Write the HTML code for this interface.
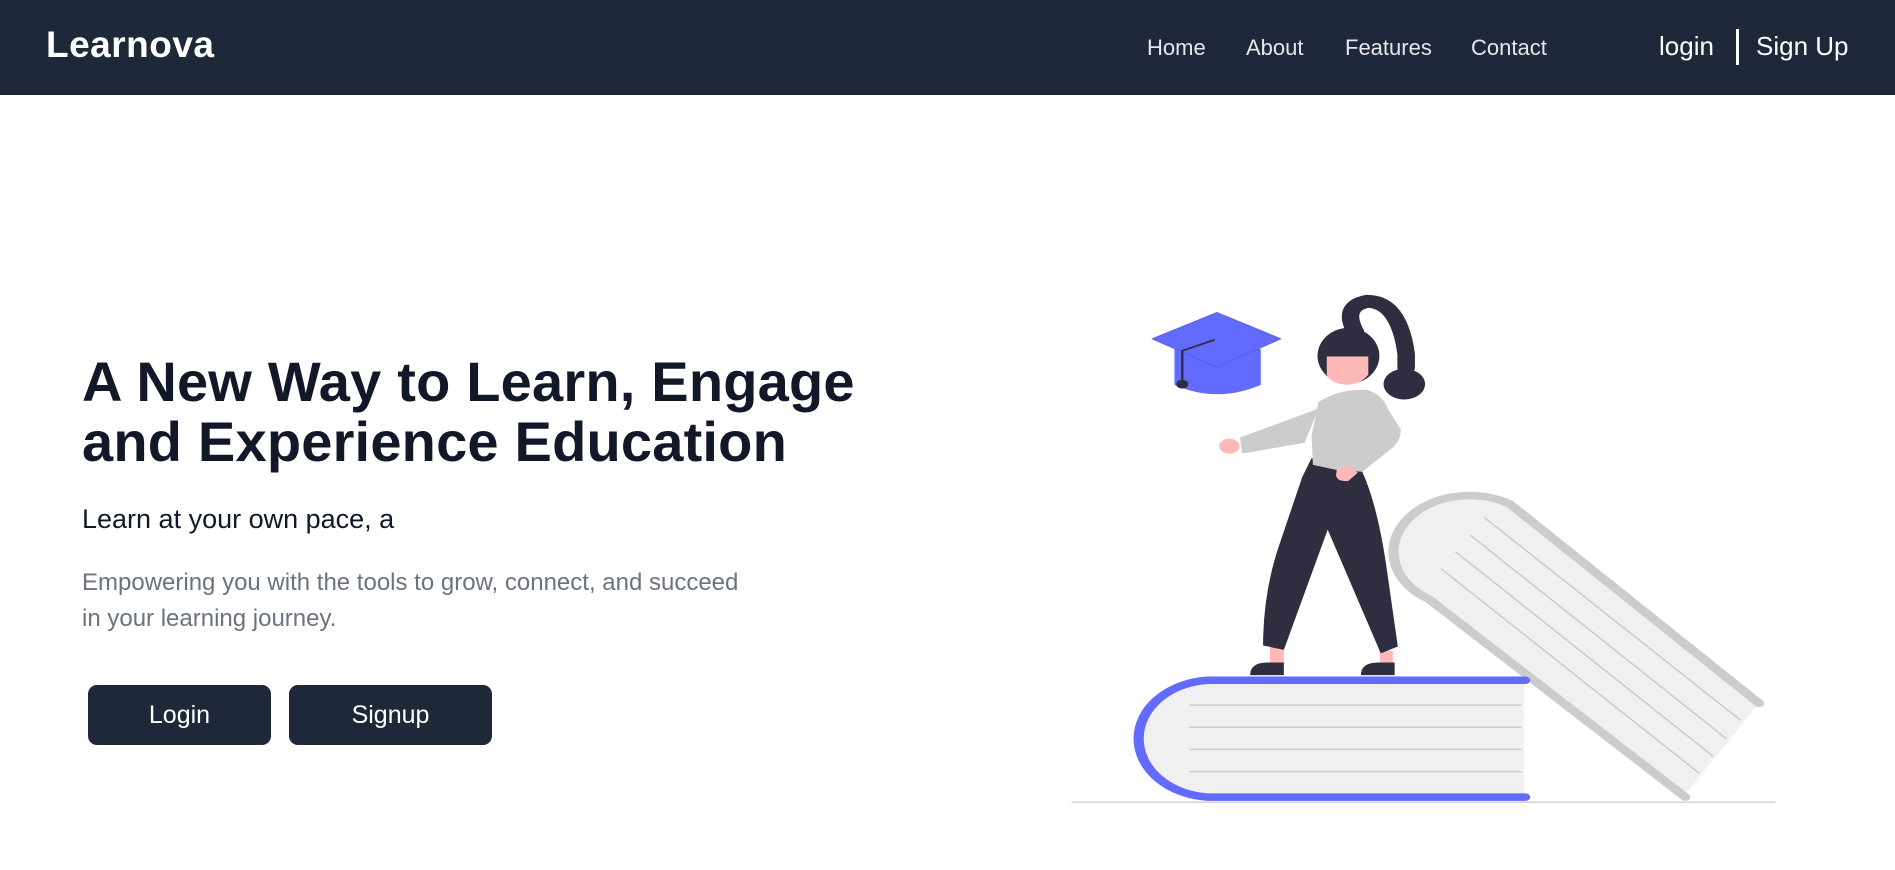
<!DOCTYPE html>
<html><head><meta charset="utf-8"><style>
*{margin:0;padding:0;box-sizing:border-box}
body{width:1895px;height:870px;background:#fff;font-family:"Liberation Sans",sans-serif;position:relative;overflow:hidden}
nav{position:absolute;left:0;top:0;width:1895px;height:95px;background:#1f2839}
.logo{position:absolute;left:46px;top:24px;color:#fff;font-size:37px;font-weight:bold;letter-spacing:0.5px}
.links a{position:absolute;top:35px;color:#e5e7eb;font-size:22px;text-decoration:none}
.auth{position:absolute;top:31px;color:#fff;font-size:26px}
.div{position:absolute;left:1736px;top:29px;width:3px;height:36px;background:#fff}
h1{position:absolute;left:82px;top:352px;font-size:56px;line-height:60px;color:#111827;font-weight:bold;letter-spacing:0.2px}
.sub{position:absolute;left:82px;top:504px;font-size:27px;color:#111827}
.p{position:absolute;left:82px;top:565px;width:680px;font-size:24px;line-height:36px;color:#6b7280}
.btn{position:absolute;top:685px;height:60px;background:#1f2839;color:#fff;font-size:25px;border-radius:9px;display:flex;align-items:center;justify-content:center}
svg{position:absolute;left:1060px;top:286px}
</style></head><body>
<nav>
<div class="logo">Learnova</div>
<div class="links">
<a style="left:1147px">Home</a><a style="left:1246px">About</a><a style="left:1345px">Features</a><a style="left:1471px">Contact</a>
</div>
<div class="auth" style="left:1659px">login</div>
<div class="div"></div>
<div class="auth" style="left:1756px">Sign Up</div>
</nav>
<h1>A New Way to Learn, Engage<br>and Experience Education</h1>
<div class="sub">Learn at your own pace, a</div>
<div class="p">Empowering you with the tools to grow, connect, and succeed in your learning journey.</div>
<div class="btn" style="left:88px;width:183px">Login</div>
<div class="btn" style="left:289px;width:203px">Signup</div>
<svg width="720" height="552" viewBox="0 0 1560 1620" preserveAspectRatio="none">
<line x1="25" y1="1515" x2="1550" y2="1515" stroke="#d8d8d8" stroke-width="5"/>
<path d="M1515,1225 L975,640 A150,150 0 0 0 800,920 L1350,1500 L1505,1240 Z" fill="#f0f0f0"/>
<path d="M1515,1225 L975,640 A150,150 0 0 0 800,920 L1355,1500" fill="none" stroke="#cccccc" stroke-width="22" stroke-linecap="round"/>
<g stroke="#cccccc" stroke-width="4">
<line x1="920" y1="680" x2="1475" y2="1275"/><line x1="888" y1="730" x2="1445" y2="1330"/>
<line x1="857" y1="780" x2="1415" y2="1380"/><line x1="826" y1="830" x2="1385" y2="1430"/></g>
<path d="M1005,1157 L320,1157 A162,172 0 0 0 320,1500 L1005,1500 Z" fill="#f0f0f0"/>
<path d="M1008,1157 L320,1157 A162,172 0 0 0 320,1500 L1008,1500" fill="none" stroke="#636bff" stroke-width="22" stroke-linecap="round"/>
<g stroke="#cccccc" stroke-width="4">
<line x1="280" y1="1230" x2="1000" y2="1230"/><line x1="280" y1="1295" x2="1000" y2="1295"/>
<line x1="280" y1="1360" x2="1000" y2="1360"/><line x1="280" y1="1425" x2="1000" y2="1425"/></g>
<path d="M248,185 L435,185 L435,290 Q340,345 248,290 Z" fill="#636bff"/>
<path d="M200,155 L340,78 L478,155 L340,238 Z" fill="#636bff" stroke="#5860f0" stroke-width="3" stroke-linejoin="round"/>
<path d="M335,158 L265,190 L265,285" fill="none" stroke="#2f2e41" stroke-width="5"/>
<circle cx="265" cy="288" r="13" fill="#2f2e41"/>
<path d="M640,135 Q610,60 665,45 Q735,45 750,200 L750,240" fill="none" stroke="#2f2e41" stroke-width="38" stroke-linecap="round"/>
<circle cx="746" cy="288" r="45" fill="#2f2e41"/>
<ellipse cx="625" cy="205" rx="67" ry="82" fill="#2f2e41"/>
<path d="M578,207 L668,207 L668,260 Q650,290 620,290 Q585,285 578,260 Z" fill="#ffb8b8"/>
<path d="M560,360 L390,445 L395,492 L530,460 Z" fill="#cccccc"/>
<circle cx="367" cy="470" r="22" fill="#ffb8b8"/>
<rect x="455" y="1060" width="30" height="50" fill="#ffb8b8"/><rect x="693" y="1070" width="28" height="40" fill="#ffb8b8"/>
<path d="M412,1142 Q412,1105 450,1105 L485,1105 L485,1142 Z" fill="#2f2e41"/>
<path d="M652,1142 Q652,1105 690,1105 L725,1105 L725,1142 Z" fill="#2f2e41"/>
<path d="M545,505 L655,545 Q690,650 710,850 L732,1058 L695,1078 L580,715 L485,1068 L440,1055 Q440,900 475,760 L525,560 Z" fill="#2f2e41"/>
<path d="M560,340 Q610,300 665,305 Q700,320 710,360 L738,420 Q740,450 720,475 L655,545 L600,540 L548,525 L545,440 Z" fill="#cccccc"/>
<path d="M600,535 Q625,520 645,548 L625,572 Q600,575 598,555 Z" fill="#ffb8b8"/>
</svg>
</body></html>
